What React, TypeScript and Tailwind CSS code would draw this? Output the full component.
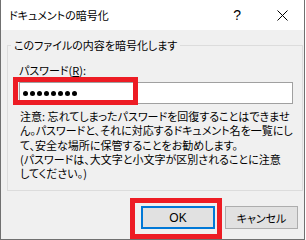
import React from 'react';

const jp = "font-['Noto_Sans_CJK_JP','Noto_Sans',sans-serif] [font-feature-settings:'palt']";

export default function App() {
  return (
    <div className={`relative w-[305px] h-[240px] bg-[#f0f0f0] border-x border-b border-[#707070] flex flex-col text-black ${jp}`}>
      {/* title bar */}
      <div className="h-[30px] bg-white flex items-center shrink-0">
        <span className="ml-[8px] text-[11px] leading-[16px]">ドキュメントの暗号化</span>
        <span className="ml-auto mr-[36px] text-[14px] leading-[16px] font-['Liberation_Sans',sans-serif]">?</span>
        <svg width="11" height="11" viewBox="0 0 11 11" className="mr-[16px]">
          <path d="M0.5 0.5 L10.5 10.5 M10.5 0.5 L0.5 10.5" stroke="#000" strokeWidth="1" />
        </svg>
      </div>

      {/* body */}
      <fieldset className="mx-[6px] mt-[7px] border border-[#dcdcdc] pb-[10px]">
        <legend className="ml-[3px] px-[3px] text-[11px] leading-[16px]">このファイルの内容を暗号化します</legend>
        <div className="pl-[11px] pr-[9px]">
          <div className="mt-[9px] text-[11px] leading-[16px]">
            パスワード(<span className="underline">R</span>):
          </div>
          <div className="mt-[4px] h-[22px] bg-white border border-[#a0a0a0] flex items-center gap-[2px] pl-[3px]">
            {Array.from({ length: 8 }).map((_, i) => (
              <span key={i} className="w-[5px] h-[5px] rounded-full bg-black" />
            ))}
          </div>
          <p className="mt-[5px] text-[11px] leading-[14.3px] whitespace-nowrap pl-px">
            注意: 忘れてしまったパスワードを回復することはできませ<br />
            ん。パスワードと、それに対応するドキュメント名を一覧にし<br />
            て、安全な場所に保管することをお勧めします。<br />
            (パスワードは、大文字と小文字が区別されることに注意<br />
            してください。)
          </p>
        </div>
      </fieldset>

      <div className="mt-[15px] pr-[6px] flex justify-end gap-[10px]">
        <button className="w-[74px] h-[23px] bg-[#e1e1e1] border-2 border-[#0078d7] text-[12px] leading-[16px] font-['Liberation_Sans',sans-serif]">
          OK
        </button>
        <button className="w-[73px] h-[23px] bg-[#e1e1e1] border border-[#adadad] text-[11px] leading-[16px]">
          キャンセル
        </button>
      </div>

      {/* annotation boxes */}
      <div className="absolute left-[12px] top-[77px] w-[125px] h-[28px] border-[5px] border-[#ed1c24]" />
      <div className="absolute left-[129px] top-[198px] w-[92px] h-[41px] border-[5px] border-[#ed1c24]" />
    </div>
  );
}
